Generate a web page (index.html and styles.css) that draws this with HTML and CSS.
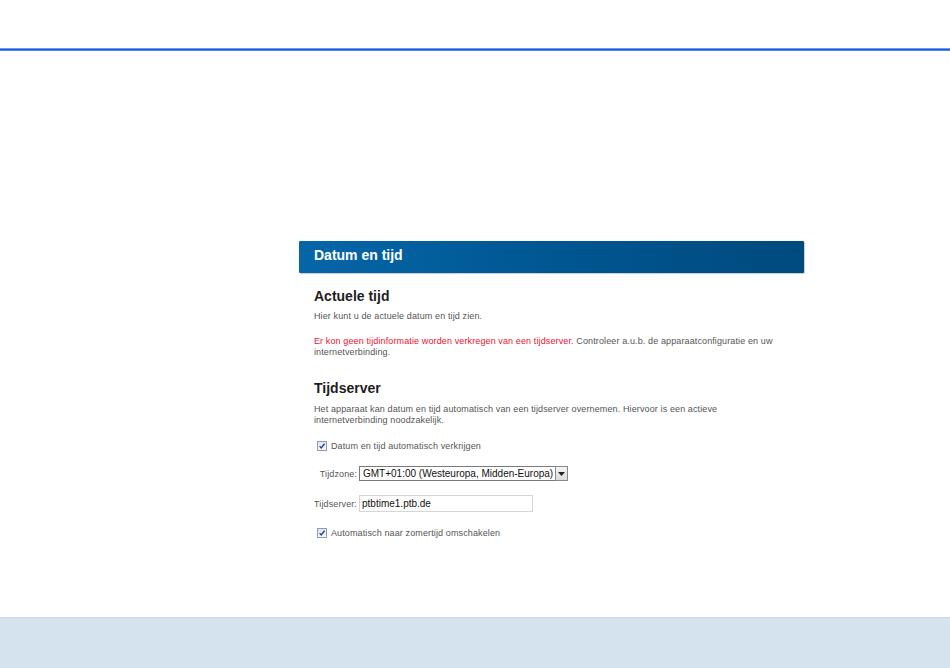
FILE: index.html
```html
<!DOCTYPE html>
<html lang="nl">
<head>
<meta charset="utf-8">
<title>Datum en tijd</title>
<link rel="stylesheet" href="styles.css">
</head>
<body>
<div class="page">
  <div class="topbar"></div>
  <div class="rule"></div>
  <main class="main">
    <section class="panel">
      <h1 class="panel-title">Datum en tijd</h1>
      <div class="panel-body">
        <h2 class="heading first">Actuele tijd</h2>
        <p class="text intro">Hier kunt u de actuele datum en tijd zien.</p>
        <p class="text warn"><span class="red">Er kon geen tijdinformatie worden verkregen van een tijdserver.</span> Controleer a.u.b. de apparaatconfiguratie en uw internetverbinding.</p>

        <h2 class="heading second">Tijdserver</h2>
        <p class="text intro2">Het apparaat kan datum en tijd automatisch van een tijdserver overnemen. Hiervoor is een actieve internetverbinding noodzakelijk.</p>

        <label class="check-row row1">
          <span class="checkbox"><svg viewBox="0 0 10 10" width="10" height="10"><path d="M2 5.2 L4 7.4 L8.2 2.2" fill="none" stroke="#1f3f8c" stroke-width="1.6"/></svg></span>
          <span class="check-label">Datum en tijd automatisch verkrijgen</span>
        </label>

        <div class="field-row zone-row">
          <span class="field-label zone-label">Tijdzone:</span>
          <div class="select">
            <span class="select-value">GMT+01:00 (Westeuropa, Midden-Europa)</span>
            <span class="select-btn"><svg viewBox="0 0 7 4" width="7" height="4"><path d="M0 0 H7 L3.5 4 Z" fill="#222"/></svg></span>
          </div>
        </div>

        <div class="field-row server-row">
          <span class="field-label">Tijdserver:</span>
          <input class="textbox" type="text" value="ptbtime1.ptb.de">
        </div>

        <label class="check-row row2">
          <span class="checkbox"><svg viewBox="0 0 10 10" width="10" height="10"><path d="M2 5.2 L4 7.4 L8.2 2.2" fill="none" stroke="#1f3f8c" stroke-width="1.6"/></svg></span>
          <span class="check-label">Automatisch naar zomertijd omschakelen</span>
        </label>
      </div>
    </section>
  </main>
  <footer class="footer"></footer>
</div>
</body>
</html>
```

FILE: styles.css
```css
* { box-sizing: border-box; }
html, body { margin: 0; padding: 0; }
body {
  background: #ffffff;
  font-family: "Liberation Sans", Arial, sans-serif;
  color: #555;
}
.page {
  width: 950px;
  height: 668px;
  display: flex;
  flex-direction: column;
  overflow: hidden;
}
.topbar { height: 48px; flex: none; }
.rule {
  height: 3px;
  flex: none;
  background: linear-gradient(#6b9af0 0, #6b9af0 1px, #1a57dd 1px, #1a57dd 2px, #4f85ec 2px);
}
.main {
  flex: 1;
  padding: 190px 0 0 299px;
}
.panel { width: 505px; }
.panel-title {
  margin: 0;
  height: 32px;
  padding: 4px 0 0 15px;
  font-size: 14px;
  line-height: 20px;
  font-weight: bold;
  color: #ffffff;
  background: linear-gradient(90deg, #0666a8 0%, #005894 45%, #004a7e 100%);
  box-shadow: 1px 1px 0 #c9d2da;
  border-radius: 1px;
}
.panel-body {
  padding: 0 14px 0 15px;
}
.heading {
  margin: 0;
  font-size: 14px;
  line-height: 17px;
  font-weight: bold;
  color: #1e1e1e;
}
.heading.first { margin-top: 15px; }
.heading.second { margin-top: 22px; }
.text {
  margin: 0;
  font-size: 9px;
  line-height: 11px;
  letter-spacing: 0.12px;
  color: #555;
}
.intro { margin-top: 6px; }
.warn { margin-top: 14px; }
.intro2 { margin-top: 7px; }
.red { color: #ee1133; }

.check-row {
  display: flex;
  align-items: center;
  height: 13px;
  padding-left: 3px;
  gap: 4px;
  font-size: 9px;
  letter-spacing: 0.12px;
  color: #555;
}
.row1 { margin-top: 13px; }
.row2 { margin-top: 14px; }
.checkbox {
  width: 10px;
  height: 10px;
  flex: none;
  border: 1px solid #8d9cb0;
  background: linear-gradient(#dfe6ee, #f5f8fb);
  display: flex;
  align-items: center;
  justify-content: center;
}
.checkbox svg { display: block; width: 8px; height: 8px; }

.field-row {
  display: flex;
  align-items: center;
  gap: 2px;
}
.field-label {
  font-size: 9px;
  letter-spacing: 0.12px;
  color: #555;
  width: 43px;
  text-align: right;
}
.zone-label { margin-left: 0; }
.zone-row { margin-top: 14px; height: 15px; }
.select {
  display: flex;
  align-items: stretch;
  height: 15px;
  border: 1px solid #7a7a7a;
  background: #fff;
}
.select-value {
  font-size: 10px;
  line-height: 13px;
  color: #111;
  padding: 0 2px 0 3px;
  white-space: nowrap;
}
.select-btn {
  width: 13px;
  border: 1px solid #8a8a8a;
  margin: -1px -1px -1px 0;
  background: linear-gradient(#f4f4f4, #dcdcdc);
  display: flex;
  align-items: center;
  justify-content: center;
}
.select-btn svg { display: block; }
.server-row { margin-top: 14px; height: 17px; }
.textbox {
  width: 174px;
  height: 17px;
  margin: 0;
  border: 1px solid #d6d6d6;
  padding: 0 2px;
  font-family: "Liberation Sans", Arial, sans-serif;
  font-size: 10px;
  color: #111;
  background: #fff;
  outline: none;
}
.footer {
  height: 51px;
  flex: none;
  background: #d5e3ee;
  border-top: 1px solid #cbd9e4;
}
```
